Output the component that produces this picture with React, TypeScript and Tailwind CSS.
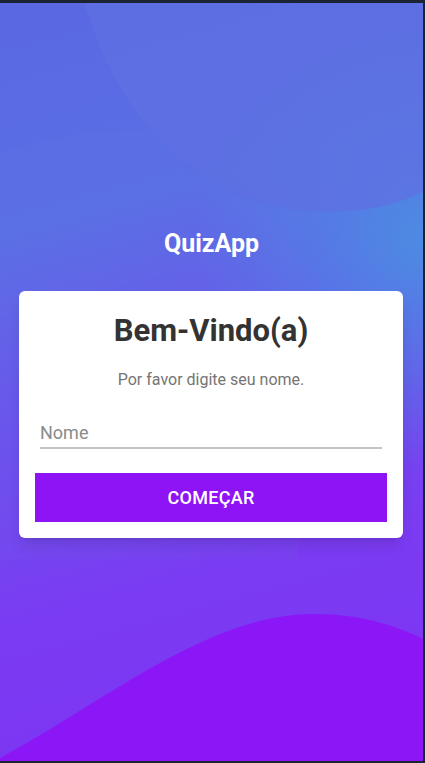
import React, { useState } from 'react';

function Background() {
  return (
    <svg className="absolute inset-0 h-full w-full" viewBox="0 0 425 763" preserveAspectRatio="none">
      <defs>
        <linearGradient id="bg" x1="0" y1="0" x2="0.15" y2="1">
          <stop offset="0" stopColor="#5a68e2" />
          <stop offset="0.3" stopColor="#5a6fe4" />
          <stop offset="0.55" stopColor="#6a52ec" />
          <stop offset="0.8" stopColor="#7a3cf2" />
          <stop offset="1" stopColor="#7d36f3" />
        </linearGradient>
        <radialGradient id="side" cx="425" cy="240" r="230" gradientUnits="userSpaceOnUse">
          <stop offset="0" stopColor="#4a90e2" stopOpacity="0.9" />
          <stop offset="1" stopColor="#4a90e2" stopOpacity="0" />
        </radialGradient>
      </defs>
      <rect width="425" height="763" fill="url(#bg)" />
      <rect width="425" height="763" fill="url(#side)" />
      {/* lighter hill on the left */}
      <path d="M0,150 C50,135 110,125 150,128 C190,175 240,205 300,210 L300,560 L0,560 Z" fill="#6f8cf0" opacity="0.06" />
      {/* big circle top right */}
      <path d="M85,0 C120,120 200,205 320,210 C370,212 405,200 425,190 L425,0 Z" fill="#5f70e2" opacity="0.75" />
      {/* bottom wave */}
      <path d="M0,763 L0,760 C110,700 210,615 315,615 C365,615 400,628 425,640 L425,763 Z" fill="#8c17f6" />
    </svg>
  );
}

export default function App() {
  const [name, setName] = useState('');

  return (
    <div
      className="relative h-[763px] w-full overflow-hidden border-t-[3px] border-r-2 border-b-2 border-[#1c2333]"
      style={{ fontFamily: 'Roboto, "Liberation Sans", sans-serif' }}
    >
      <Background />
      <div className="relative flex flex-col items-center pt-[226px]">
        <h1 className="text-[25px] font-bold leading-[30px] text-white">QuizApp</h1>

        <div className="mt-[32px] w-[384px] ml-[-1px] rounded-md bg-white px-4 pt-[22px] pb-4 shadow-lg">
          <h2 className="text-center text-[31px] font-bold leading-[36px] text-[#333333]">Bem-Vindo(a)</h2>
          <p className="mt-[21px] text-center text-[16px] leading-[20px] text-[#757575]">Por favor digite seu nome.</p>

          <div className="mx-[5px] mt-[31px]">
            <input
              type="text"
              value={name}
              onChange={(e) => setName(e.target.value)}
              placeholder="Nome"
              className="w-full border-b-2 border-[#c4c4c4] bg-transparent pb-[2px] text-[18px] leading-[24px] text-[#333] outline-none placeholder:text-[#8a8a8a]"
            />
          </div>

          <button
            type="button"
            className="mt-[24px] h-[49px] w-full bg-[#8e14f6] text-[18px] font-medium tracking-[0.3px] text-white"
          >
            COMEÇAR
          </button>
        </div>
      </div>
    </div>
  );
}
